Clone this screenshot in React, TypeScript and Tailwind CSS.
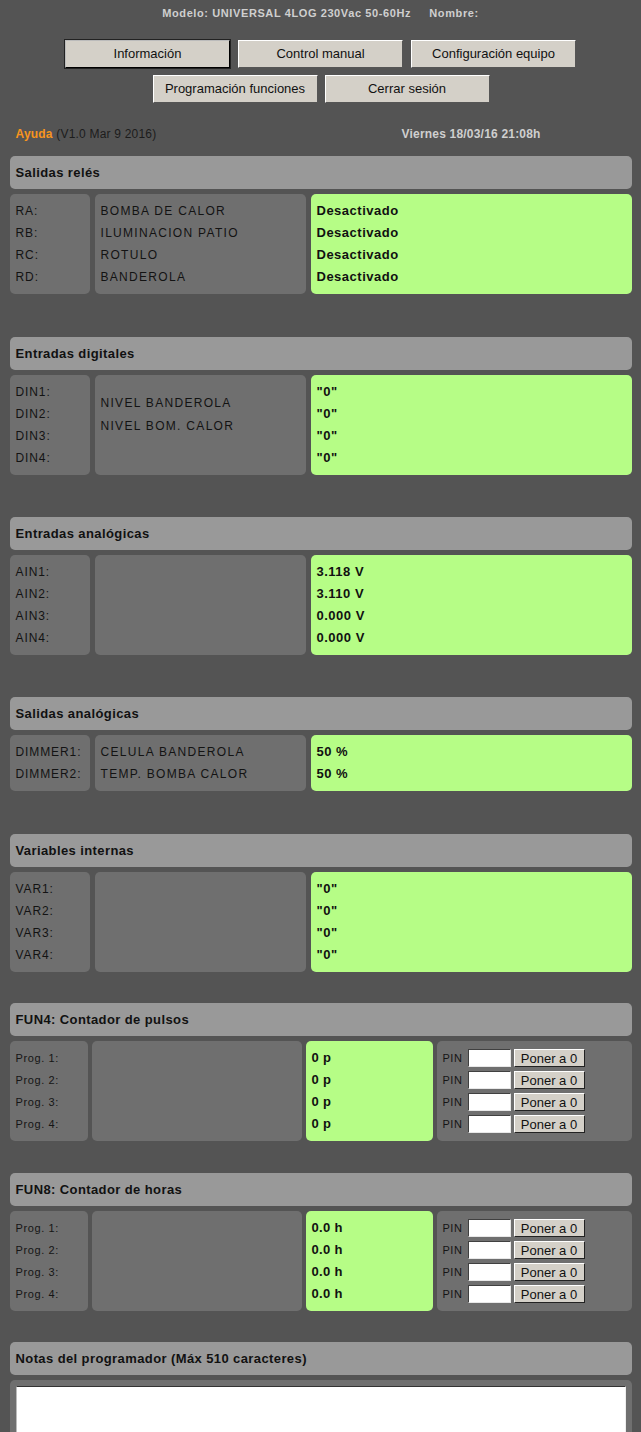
import React from 'react';

const font = { fontFamily: '"Liberation Sans", Arial, sans-serif' };

const SectionHeader: React.FC<{ title: string }> = ({ title }) => (
  <div className="h-[33px] bg-[#999999] rounded-[5px] flex items-center px-[6px] text-[13px] font-bold text-[#111] tracking-[0.4px]">
    {title}
  </div>
);

const Cell: React.FC<{ className?: string; children?: React.ReactNode }> = ({ className = '', children }) => (
  <div className={`rounded-[5px] ${className}`}>{children}</div>
);

interface Row {
  label: string;
  name?: string;
  value: string;
}

const Section: React.FC<{ title: string; rows: Row[]; namesOffset?: boolean; mt: string }> = ({ title, rows, namesOffset, mt }) => (
  <div className={mt}>
    <SectionHeader title={title} />
    <div className="mt-[5px] flex gap-[5px]">
      <Cell className="w-[80px] bg-[#6f6f6f] py-[6px] px-[6px]">
        {rows.map((r) => (
          <div key={r.label} className="h-[22px] flex items-center text-[12px] tracking-[0.9px] text-[#131313] whitespace-nowrap">
            {r.label}
          </div>
        ))}
      </Cell>
      <Cell className={`w-[211px] bg-[#6f6f6f] px-[6px] ${namesOffset ? 'pt-[16px]' : 'py-[6px]'}`}>
        {rows
          .filter((r) => r.name !== undefined)
          .map((r, i) => (
            <div key={i} className={`${namesOffset ? 'h-[23px]' : 'h-[22px]'} flex items-center text-[12px] tracking-[1.3px] text-[#131313]`}>
              {r.name}
            </div>
          ))}
      </Cell>
      <Cell className="flex-1 bg-[#b6fd86] py-[6px] px-[6px]">
        {rows.map((r) => (
          <div key={r.label} className="h-[22px] flex items-center text-[13px] font-bold tracking-[0.5px] text-[#111]">
            {r.value}
          </div>
        ))}
      </Cell>
    </div>
  </div>
);

const FunSection: React.FC<{ title: string; values: string[]; mt: string }> = ({ title, values, mt }) => (
  <div className={mt}>
    <SectionHeader title={title} />
    <div className="mt-[5px] flex gap-[4px] h-[100px]">
      <Cell className="w-[78px] bg-[#6f6f6f] py-[6px] px-[6px]">
        {values.map((_, i) => (
          <div key={i} className="h-[22px] flex items-center text-[11px] tracking-[0.6px] text-[#151515]">
            Prog. {i + 1}:
          </div>
        ))}
      </Cell>
      <Cell className="w-[210px] bg-[#6f6f6f]" />
      <Cell className="w-[127px] bg-[#b6fd86] py-[6px] px-[6px]">
        {values.map((v, i) => (
          <div key={i} className="h-[22px] flex items-center text-[13px] font-bold tracking-[0.3px] text-[#111]">
            {v}
          </div>
        ))}
      </Cell>
      <Cell className="flex-1 bg-[#6f6f6f] py-[6px] pl-[6px]">
        {values.map((_, i) => (
          <div key={i} className="h-[22px] flex items-center">
            <span className="w-[25px] text-[11px] tracking-[0.5px] text-[#151515]">PIN</span>
            <input
              type="text"
              className="w-[43px] h-[18px] bg-white border border-t-[#404040] border-l-[#404040] border-b-[#e8e8e8] border-r-[#e8e8e8] outline-none"
            />
            <button className="ml-[3px] w-[71px] h-[18px] bg-[#d4d0c8] border border-t-white border-l-white border-b-[#222] border-r-[#222] text-[13px] text-[#111] leading-none">
              Poner a 0
            </button>
          </div>
        ))}
      </Cell>
    </div>
  </div>
);

const TopButton: React.FC<{ label: string; focused?: boolean }> = ({ label, focused }) => (
  <button
    className={`w-[165px] h-[28px] bg-[#d4d0c8] text-[13px] text-[#111] border ${
      focused
        ? 'border-t-[#bbb] border-l-[#bbb] border-b-black border-r-black outline outline-1 outline-[#222]'
        : 'border-t-white border-l-white border-b-[#555] border-r-[#555]'
    }`}
  >
    {label}
  </button>
);

const App: React.FC = () => {
  return (
    <div className="min-h-[1432px] bg-[#545454] overflow-hidden" style={font}>
      <div className="pt-[7px] text-center text-[11px] font-bold text-[#cfcfcf] tracking-[0.6px] h-[13px] leading-[13px]">
        Modelo: UNIVERSAL 4LOG 230Vac 50-60Hz&nbsp;&nbsp;&nbsp;&nbsp; Nombre:
      </div>

      <div className="mt-[27px] flex justify-center gap-[8px]">
        <TopButton label="Información" focused />
        <TopButton label="Control manual" />
        <TopButton label="Configuración equipo" />
      </div>
      <div className="mt-[7px] flex justify-center gap-[7px] pl-[1px]">
        <TopButton label="Programación funciones" />
        <TopButton label="Cerrar sesión" />
      </div>

      <div className="w-[622px] mx-auto">
        <div className="mt-[24px] flex px-[6px] text-[12px] h-[14px] leading-[14px] tracking-[0.2px]">
          <span className="w-[386px]">
            <span className="font-bold text-[#f7941d]">Ayuda</span>{' '}
            <span className="text-[#1c1c1c]">(V1.0 Mar 9 2016)</span>
          </span>
          <span className="font-bold text-[#cfcfcf]">Viernes 18/03/16 21:08h</span>
        </div>

        <Section
          mt="mt-[15px]"
          title="Salidas relés"
          rows={[
            { label: 'RA:', name: 'BOMBA DE CALOR', value: 'Desactivado' },
            { label: 'RB:', name: 'ILUMINACION PATIO', value: 'Desactivado' },
            { label: 'RC:', name: 'ROTULO', value: 'Desactivado' },
            { label: 'RD:', name: 'BANDEROLA', value: 'Desactivado' },
          ]}
        />

        <Section
          mt="mt-[43px]"
          title="Entradas digitales"
          namesOffset
          rows={[
            { label: 'DIN1:', name: 'NIVEL BANDEROLA', value: '"0"' },
            { label: 'DIN2:', name: 'NIVEL BOM. CALOR', value: '"0"' },
            { label: 'DIN3:', value: '"0"' },
            { label: 'DIN4:', value: '"0"' },
          ]}
        />

        <Section
          mt="mt-[42px]"
          title="Entradas analógicas"
          rows={[
            { label: 'AIN1:', value: '3.118 V' },
            { label: 'AIN2:', value: '3.110 V' },
            { label: 'AIN3:', value: '0.000 V' },
            { label: 'AIN4:', value: '0.000 V' },
          ]}
        />

        <Section
          mt="mt-[42px]"
          title="Salidas analógicas"
          rows={[
            { label: 'DIMMER1:', name: 'CELULA BANDEROLA', value: '50 %' },
            { label: 'DIMMER2:', name: 'TEMP. BOMBA CALOR', value: '50 %' },
          ]}
        />

        <Section
          mt="mt-[43px]"
          title="Variables internas"
          rows={[
            { label: 'VAR1:', value: '"0"' },
            { label: 'VAR2:', value: '"0"' },
            { label: 'VAR3:', value: '"0"' },
            { label: 'VAR4:', value: '"0"' },
          ]}
        />

        <FunSection mt="mt-[31px]" title="FUN4: Contador de pulsos" values={['0 p', '0 p', '0 p', '0 p']} />
        <FunSection mt="mt-[32px]" title="FUN8: Contador de horas" values={['0.0 h', '0.0 h', '0.0 h', '0.0 h']} />

        <div className="mt-[31px]">
          <SectionHeader title="Notas del programador (Máx 510 caracteres)" />
          <div className="mt-[5px] bg-[#6f6f6f] rounded-[5px] px-[6px] pt-[6px] pb-[6px]">
            <textarea className="block w-full h-[120px] bg-white border border-t-[#333] border-l-[#bbb] border-r-[#eee] border-b-[#eee] resize-none outline-none overflow-y-scroll" />
          </div>
        </div>
      </div>
    </div>
  );
};

export default App;
